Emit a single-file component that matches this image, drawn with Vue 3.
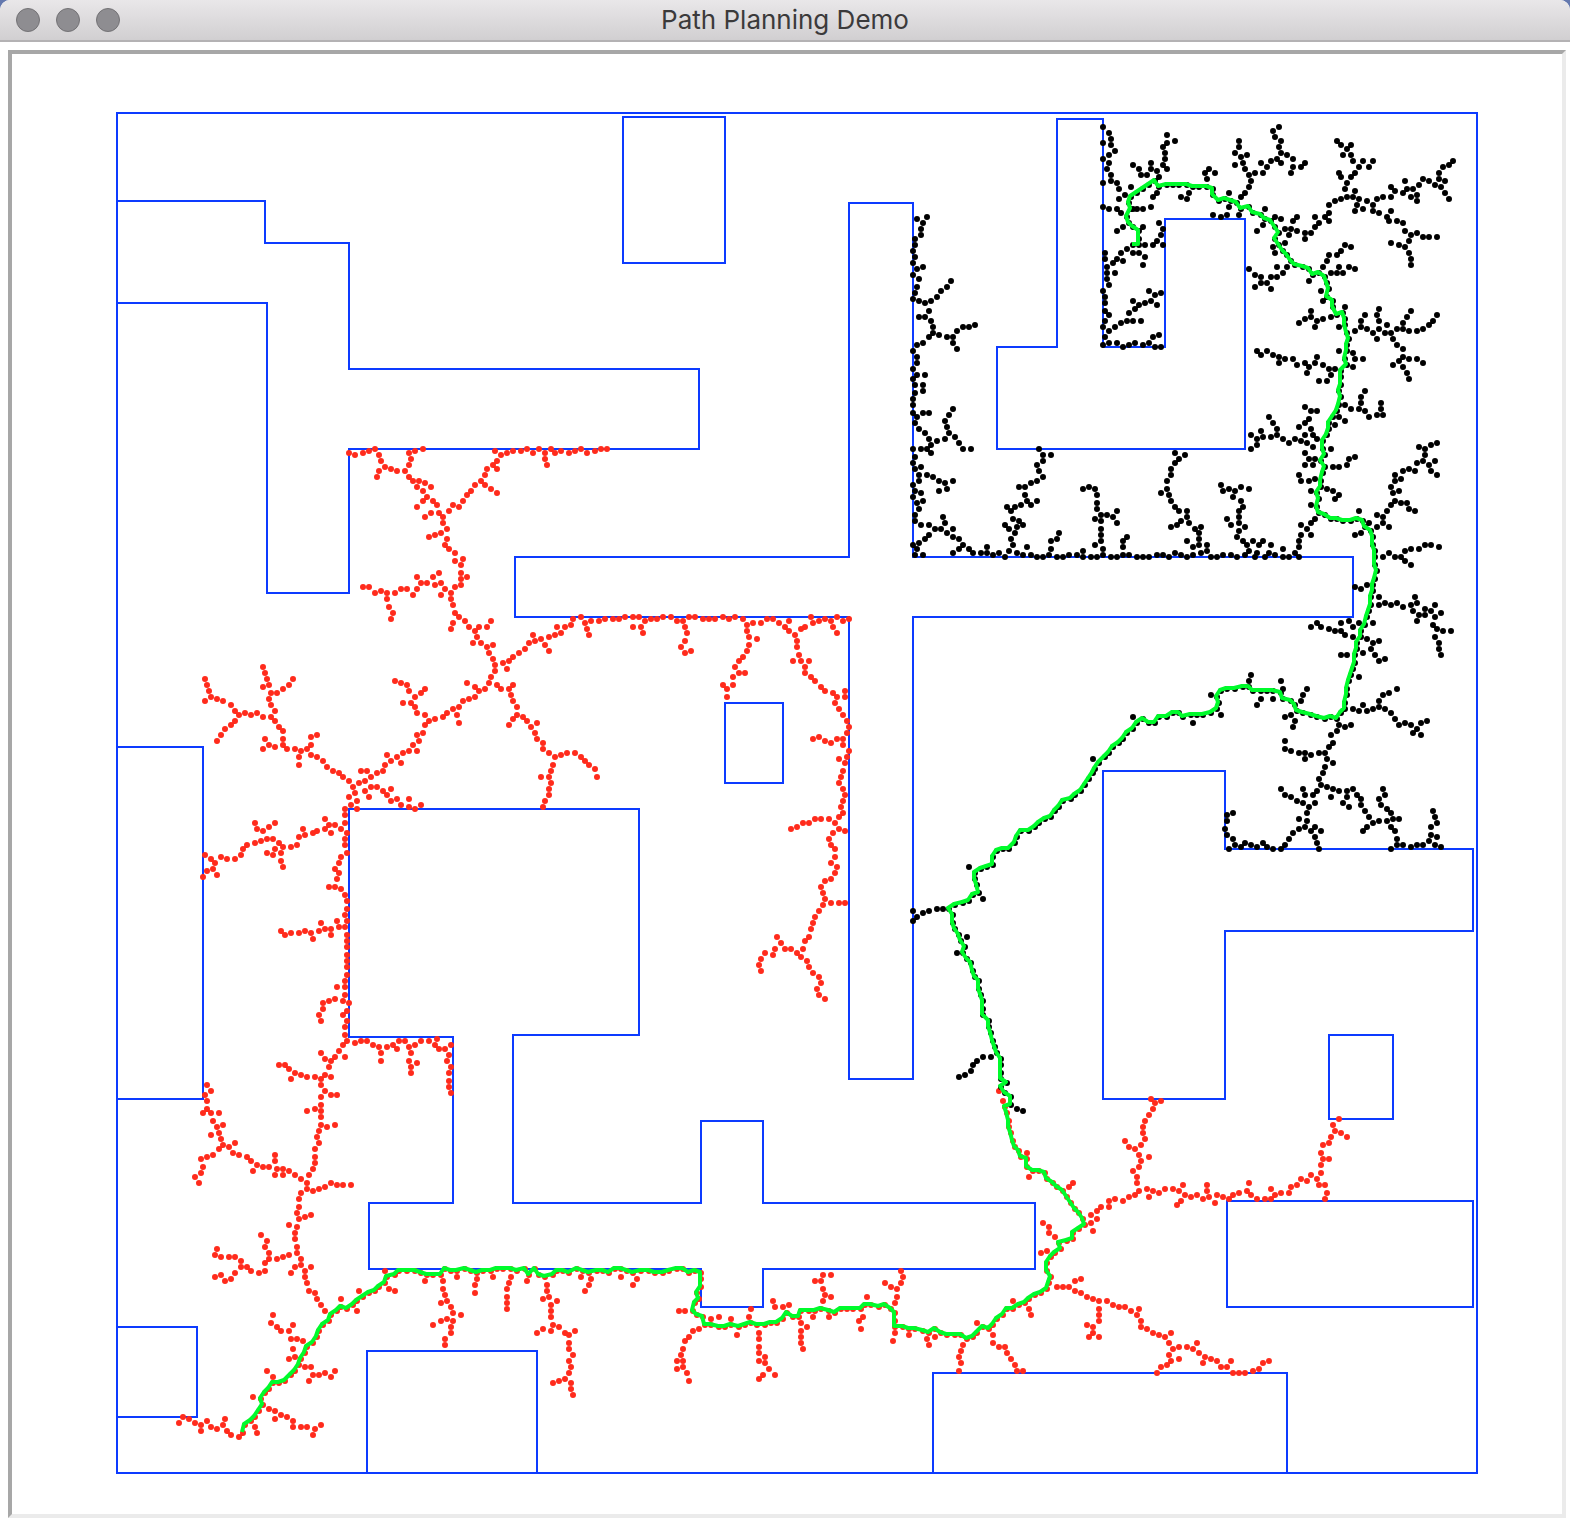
<script setup>
// Each patch lists "x,y" samples measured from its own origin, at `sx` by `sy` steps per pixel.
// Samples settle on the odd pixels of the two-pixel world grid.
const snap = (v) => 2 * Math.round((v - 1) / 2) + 1
const place = ({ x, y, sx = 3, sy = 3, at }) =>
  at.trim().split(/\s+/).map((pair) => {
    const [a, b] = pair.split(',').map(Number)
    return [snap(x + a / sx), snap(y + b / sy)]
  })

const goalPatches = [
  { x: 900, y: 110, at: `609,51 627,69 633,87 633,105 609,99 645,123 627,135 609,147 627,159 621,177 633,195 633,213 609,219 651,219 657,237 675,255 657,267 693,231 609,291 627,297 651,297 663,309 699,297 711,297 729,297 753,291
801,75 825,93 801,99 789,111 795,129 795,147 789,165 801,177 699,165 717,177 723,195 741,195 753,159 753,177 771,183 777,201
771,249 759,261 843,261 861,267 867,249 915,189 927,177 945,189 921,207 987,249 987,291 939,315 963,321 981,315
669,351 651,363 729,351 777,339 789,357 783,375 771,393 789,405 759,405 735,405
681,417 663,429 699,429 717,429 735,441 729,465 651,447 669,453 639,459 615,429 615,447 621,471 621,489 645,489 621,507 627,525 609,543 615,561 615,579 615,603 627,615 615,633 609,651 627,663 645,651 663,639 681,633 699,633 723,633 687,609 705,597 717,585 735,579 753,573 771,585 699,573 747,543 765,555 783,549
615,681 609,705 627,699 651,699 669,711 687,705 705,699 729,705 747,699 759,681 777,675 765,711 783,711
81,321 51,327 69,339 63,357 63,375 45,387 45,405 39,423 45,441 39,459 51,477 69,471 39,495 57,507 51,531 45,549 39,567 57,573 75,579 93,573 111,561 123,543 141,531 153,513 87,603 75,621 57,621 93,633 99,651 99,669 87,681 69,699 51,705 39,723 117,675 141,681 159,681 171,663 189,651 207,651 225,645 159,699 171,717 51,741 51,759 39,777 51,795 75,795 39,807 45,825 69,825 69,843 45,849 39,867 39,885 39,909 51,921 69,909 87,909 45,939 57,957 75,969 87,987 93,1005 111,993 135,987 147,969 141,951 135,933 147,915 159,897 165,981 177,999 189,1017 213,1017 39,1017 63,1017 81,1017 93,1029 45,1041 39,1059 45,1077 63,1071 57,1095 57,1113 81,1095 99,1101 117,1113 135,1119 159,1113 141,1137 117,1143 39,1125 45,1143 63,1149 39,1161 51,1179 69,1173 57,1197 45,1215 45,1233 63,1245 87,1245 105,1257 123,1257 135,1239 129,1221 141,1269 159,1257 159,1281 177,1287 189,1305 177,1317 159,1329 207,1317 219,1329 87,1275 75,1287 57,1299 39,1305 51,1317 45,1335 69,1335
243,1329 261,1329 261,1311 279,1335 297,1329 315,1341 327,1323 339,1305 333,1287 345,1269 327,1257 315,1245 351,1251 369,1245 357,1233 339,1227 333,1203 321,1191 345,1191 363,1185 381,1173 393,1185 411,1173 375,1155 375,1131 357,1131 393,1119 411,1113 429,1101 417,1083 411,1065 429,1053 429,1035 453,1035 417,1017
351,1329 369,1335 381,1311 393,1335 411,1341 429,1341 447,1335 453,1317 453,1293 471,1287 477,1269 471,1341 489,1341 507,1335 531,1335 549,1341 549,1323 573,1341 591,1341 609,1335 609,1317 585,1305 603,1293 603,1275 603,1257 603,1233 585,1227 603,1215 621,1215 639,1221 651,1203 651,1239 591,1197 591,1179 591,1155 585,1137 567,1131 549,1137
633,1341 651,1341 669,1335 669,1311 669,1293 681,1281 687,1335 711,1341 729,1341 747,1341 771,1335 789,1335 807,1341 825,1329 843,1335 861,1341 879,1335 903,1329 921,1323 921,1305 897,1305 879,1311 861,1293 897,1287 897,1269 903,1251 885,1257 867,1239 861,1221 861,1203 837,1203 843,1233 831,1245 813,1251 825,1191 813,1173 807,1155 801,1137 783,1149 801,1113 813,1095 813,1077 825,1059 837,1047 855,1035 825,1029
933,1341 951,1341 969,1335 993,1335` },
  { x: 1220, y: 110, at: `177,51 159,63 165,81 183,93 177,111 183,129 171,147 201,135 219,147 183,159 153,153 123,159 141,171 129,189 105,189 87,195 93,213 87,231 75,249 63,261 75,177 69,159 63,141 81,135 45,129 57,111 57,93 45,165 219,171 243,171 255,159 213,189 27,249 27,291 57,315
135,297 165,321 183,327 129,345 111,363 231,321 219,333 195,357 213,357 231,363 207,375 255,369 273,369 255,387 285,351 297,339 285,321 315,321 327,309 327,333 327,285 345,273 363,267 381,261 399,261 405,243 375,237 381,219 393,201 363,201 357,189 405,189 417,171 399,153 393,135 369,135 381,117 393,105 363,105 351,93 429,153 447,171 459,153
417,267 411,285 405,303 429,297 441,273 459,285 459,303 477,309 471,267 489,261 513,261 525,243 513,231 549,249 561,237 579,237 555,213 573,261 591,255 591,273 597,225 609,207 627,213 645,225 663,231 657,207 675,213 657,189 669,171 687,165 699,153 675,249 687,267
501,321 513,303 507,333 531,333 549,339 555,363 573,375 591,369 609,381 627,381 651,381 567,393 555,411 537,405 513,399 567,429 573,447 573,465
195,399 159,411 165,429 171,471 201,471 189,489 171,501 153,501 123,501 123,519 141,519 153,537 105,495 105,531 87,477
267,513 303,543 309,573 309,471 321,453 327,435 351,435 363,423 375,405 393,411 333,489 351,489 369,489 357,471 387,471 405,477
375,591 357,651 333,621 309,627 291,633 273,621 273,603 255,627 285,651 237,639
405,663 423,651 423,633 435,615 441,657 459,669 471,687 477,657 477,633 471,615 477,597 495,669 501,645 513,669 531,657 549,657 549,639 561,621 573,603 567,663 591,663 609,657 627,645 639,633 651,615 519,687 531,705 549,717 549,741 537,753 519,765 549,771 561,789 567,807 567,747 591,747 609,759
357,723 399,729 405,747 429,747 399,771 345,777 327,777 309,765 333,795 321,813 297,813 285,759 291,741 267,771 261,789 255,759 231,765 219,747 195,747 177,741 177,759 159,735 141,723 123,735 111,723
375,885 393,897 417,897 423,879 423,861 435,843 435,903 447,921 471,915 489,915 483,897 483,879 375,933 357,921 345,945
255,891 273,903 291,903 267,927 255,939 237,951 147,921 159,939 171,957 273,957
171,975 153,981 129,981 123,963 93,975 111,987 111,1005 93,1017 189,987 207,999 225,987 243,993 255,975 261,999 279,975 291,987 279,1011 255,1029 333,1017 267,1047 285,1047 255,1065 279,1065 339,1071 357,1071 381,1065 387,1047 405,1041 237,1095 243,1113 267,1113 285,1107
651,999 633,1005 615,1017 597,1011 615,1035 609,1053 591,1059 627,1065 645,1053 633,1083 651,1095 585,1083 567,1077 549,1083 525,1095 543,1107 525,1113 513,1131` },
  { x: 1200, y: 430, at: `333,183 381,177 399,183 417,195 405,207 333,225 345,267 333,279 303,285 321,297 303,315 333,315 297,333 297,351 285,369 297,381 267,381 249,381 249,357 225,375 213,345 189,333 207,369 195,381 177,345 171,369 165,381 159,333 147,363 141,345 129,333 135,375 111,381 111,321 117,303 135,291 117,279 117,261 117,243 129,231 123,213 99,201 105,183 87,177 69,183 63,165 123,171 147,177 81,267 93,285
579,189 597,183 585,213 603,219 621,219 627,237 645,243 573,225 561,243 549,261 531,255 549,279 567,291 531,291 507,279 477,243 483,309 465,315
549,381 567,369 585,381 603,381 615,363 633,357 657,357 675,345 693,345 717,351 615,393 633,405
465,471 483,477 501,465 537,501 537,525 555,519 573,525 591,519 609,531 633,525 651,519 645,501 639,543 657,555 651,573 675,555 675,537 693,543 705,525 723,549 705,561 699,585 711,597 729,603 753,603 705,621 717,639 717,657 723,675
333,591 351,579 363,591 387,597 405,603 423,603 435,615 423,579 447,573 459,591 477,579 459,621 519,579 501,627 519,639 537,633 513,657 525,675 537,693 555,687 489,669 441,675 423,675 477,741
153,735 147,753 33,795 63,855 243,753 249,777 321,777 309,795 303,813 183,807 171,825 219,807 273,855 255,861 285,873 279,891
459,837 477,843 489,825 501,843 519,837 537,831 537,813 549,795 567,789 591,777 555,837 573,849 585,867 597,885 615,879 633,885 651,897 639,909 663,915 663,879 681,873
417,885 435,891 453,885 411,903 393,915 399,939 387,951 375,969 357,969 333,975 315,969 297,969 315,987 273,963 255,957 255,933 381,987 399,999 375,1011 369,1029 357,1047 363,1065 351,1083 339,1095 345,1119 327,1131 309,1119 291,1113 273,1101 255,1095 243,1077 309,1077 315,1095 321,1149 321,1173 297,1167 315,1191 297,1197 279,1209 267,1227 255,1245 243,1257 219,1257 201,1251 189,1239 171,1251 153,1245 135,1239 123,1251 105,1245 99,1227 81,1215 75,1197 81,1173 81,1155 99,1149 87,1257 333,1203 345,1191 363,1203 345,1221 351,1239 357,1257
381,1071 399,1077 417,1083 393,1101 441,1083 441,1101 429,1119 447,1131 459,1077 471,1095 483,1107 483,1125 495,1143 507,1161 519,1179 501,1191 489,1203 537,1173 561,1173 579,1167 597,1167 573,1149 561,1137 543,1125 537,1107 555,1095 549,1077 573,1191 585,1203 591,1227 591,1245 609,1245 573,1257 633,1251 651,1245 669,1245 687,1233 693,1215 693,1191 711,1179 705,1161 699,1143 711,1221 705,1245 723,1251` },
  { x: 900, y: 670, at: `39,723 39,753 51,741 69,729 87,723 111,717 129,717 207,591 249,687 201,801 171,849 273,1161 249,1161 231,1173 219,1185 213,1203 195,1215 177,1221 351,1317 369,1323 579,267 699,141 879,159` },
]

const startPatches = [
  { x: 170, y: 1030, at: `27,1179 39,1161 57,1167 75,1179 93,1185 93,1203 111,1173 123,1191 141,1197 159,1185 165,1167 171,1203 183,1215 207,1221 255,1191 261,1209 297,1137 315,1143 315,1167 333,1155 351,1161 369,1173 369,1191 393,1191 411,1191 435,1197 453,1185 429,1215 249,1101 291,1023 309,1041 405,1011 423,1011 417,1053 429,1035 447,1035 465,1029 483,1041 495,1023 357,987 375,981 369,957 399,933 381,927 363,927 357,903 369,885 333,903 321,891 303,879 309,855 513,807 561,843 567,783 645,723 657,777 675,783 765,753
465,843 453,825 441,807 435,789 417,783 411,759 405,741 405,723 423,711 393,705 375,711 363,729 393,687 381,669 381,651 357,675 339,681 321,687 297,687 297,669 285,651 291,633 273,615 285,699 285,723 267,729 243,723 231,711 213,711 213,693 195,681 177,681 153,681 135,675 141,657 195,729 183,747 165,753 153,735 135,741 375,627 375,609 381,591 357,585 387,567 405,561 423,555 381,549 387,531 387,507 393,489 411,477 429,483 447,477 465,471 483,459 501,465 519,465 543,465 411,459 393,447 375,435 357,423 339,417 339,435 321,417 315,435 315,393 315,375 297,411 279,411 261,405 249,423 243,393 231,381 207,375 189,369 177,351 195,339 159,345 147,357 129,375 111,381 93,387 99,411 93,429 75,441 87,459 153,327 147,309 123,315 141,291 159,285 129,273 147,249 123,249 111,237 99,249 111,213 105,195 123,183 111,165
417,435 429,417 435,399 435,381 435,357 447,339 441,321 447,303 453,285 471,291 495,285 453,261 453,243 435,237 411,243 453,225 453,201 465,183 483,195 501,195 453,165 453,147 465,135 483,141 435,141 411,141 393,135 375,129 363,147 357,117 345,105 327,105 477,111 483,93 465,87 453,69 495,81 525,81 507,63 519,45 531,33 525,15 555,39 573,33 591,33 609,45 627,51 633,69 633,93 651,51 669,45 681,57 687,33 705,33 717,51 723,69 717,93 741,99 723,111 723,129 735,45 753,33 777,33 795,45 801,27 807,57 825,57 843,45 837,75 831,93 843,111 837,129 837,153 837,171 843,189` },
  { x: 170, y: 640, at: `105,117 111,135 117,153 123,171 105,183 141,177 159,183 183,195 195,213 207,225 195,243 183,255 165,267 153,285 141,303 225,219 243,225 261,219 279,231 303,231 315,213 303,195 297,177 303,159 321,159 339,147 357,135 369,117 297,135 279,141 291,117 285,99 279,81 315,243 327,261 339,273 339,297 339,315 315,321 297,315 285,297 279,327 351,327 375,327 393,333 411,327 423,315 423,291 441,285 387,351 387,375 423,345 441,351 459,363 471,381 489,393 507,399
519,411 537,423 549,441 555,459 537,471 561,483 543,495 561,507 525,507 525,525
525,549 531,579 513,567 495,555 477,555 465,537 465,567 483,579 441,573 429,579 405,585 399,567 387,591 381,615 363,621 339,621 333,639 333,663 339,681 327,609 309,597 291,597 273,603 255,609 315,627 309,645 291,639 231,615 219,627 213,645 195,657 171,657 153,651 123,657 105,645 135,669 129,687 111,693 99,711 141,705 255,549 261,567 279,573 297,561 315,549
525,597 525,615 531,639 513,651 507,669 495,687 507,699 501,717 513,747 495,741 477,741 525,765 531,783 531,807 525,825 531,843 525,861 507,861 501,843 483,867 465,867 483,885 453,849 447,873 423,879 429,897 405,873 387,879 363,879 345,885 333,873
531,885 531,903 531,921 531,945 531,963 531,981 531,1005 525,1023 525,1041 501,1041 525,1065 537,1089 519,1083 495,1077 477,1083 459,1089 459,1107 447,1125 453,1143 531,1113 519,1125 531,1143 525,1161` },
  { x: 340, y: 430, at: `63,1023 81,1023 57,1059 75,1053 93,1041 111,1029 129,1023 135,1005 153,993 141,975 171,981 183,999 189,969 207,963 231,963 219,945 237,933 231,915 249,909 255,885 267,873 255,855 231,849 225,831 213,819 189,819 225,801 243,789 255,777 207,783 201,765 183,759 165,753 285,867 309,861 321,849 339,837 351,855 357,879 357,831 369,813 387,807 405,801 417,783 405,771 381,759 435,777 447,759 453,741 465,723 465,705 459,687 447,669 441,651 459,645 423,639 399,639 411,621 405,603 387,591 417,591 441,591 453,573 375,573 357,561 345,549 339,579 333,597 339,525 333,507 333,489 315,477 303,495 303,459 285,465 279,441 297,429 261,459 243,459 231,441 231,477 219,495 201,477 183,477 165,489 141,489 141,507 147,531 159,549 153,567 123,483 105,489 87,471 69,471 345,471 363,465 363,447 381,441 363,429 363,405 345,393 369,387 345,369 327,357 315,345 321,327 321,297 303,309 285,315 267,321 309,279 309,261 297,249 273,249 255,261 291,225 279,213 261,201 249,213 231,231 249,183 231,171 273,171 255,159 237,153 219,153 207,141 195,123 171,123 153,117 135,111 117,123 111,141 123,93 117,75 105,57 87,63 69,69 45,75 27,69 207,105 213,87 207,69 225,63 249,57
327,243 339,225 357,231 369,213 381,195 393,183 405,165 423,153 435,135 441,117 459,105 471,117 471,93 483,75 465,63 435,165 453,177 471,189 501,69 519,63 543,63 561,57 579,69 597,57 615,69 615,87 621,105 633,57 645,69 663,63 687,69 705,63 723,57 741,69 765,63 783,57 801,57
75,1083 93,1071 111,1071 87,1101 129,1083 141,1095 153,1077 153,1113 171,1107 183,1125 207,1107 207,1131 225,1137 243,1125
471,765 483,777 507,777 519,765 513,795 519,813 531,831 531,855 519,867 507,885 549,861 561,873 573,891 591,879 585,909 591,927 609,939 609,957 627,969 645,981 663,975 681,969 705,969 723,981 735,993 747,1005 765,1017 771,1041 639,1005 633,1023 627,1041 603,1041 633,1059 627,1077 627,1095 615,1113 609,1131
489,699 507,693 501,717 519,681 537,669 555,657 567,639 585,633 579,615 603,627 615,645 627,663 627,621 645,615 663,609 651,591 675,591 693,585 699,567 723,561 735,579 741,597 747,615 753,573 777,573 795,567 819,567 837,567 855,561` },
  { x: 540, y: 600, at: `279,51 297,51 315,63 303,81 279,81 309,99 333,57 351,57 369,51 393,51 411,63 429,63 447,51 465,51 435,81 441,99 435,123 423,141 435,159 453,153 489,57 507,57 525,57 549,51 567,57 585,51 609,57 621,75 639,69 663,69 681,57 699,57 717,69 735,81 747,63 747,93 621,93 627,111 651,117 627,135 621,153 609,171 597,183 585,201 597,219 615,219 579,231 579,255 561,267 549,255 561,291 765,105 783,87 795,81 819,69 813,51 837,63 855,57 873,63 891,51 879,81 891,99 909,63 927,57 771,123 771,141 777,165 759,183 783,183 807,183 795,201 795,219 813,231 825,243 843,261 855,273 879,279 891,291 915,273 915,291 885,309 897,327 909,345 921,363 927,381 921,399 909,417 891,417 909,435 873,429 855,423 837,411 819,417 927,453 921,471 897,477 915,489 909,513 903,531 897,549 909,567 915,585 909,603 903,621 909,639 897,651 885,669 867,657 843,657 825,657 807,669 789,669 771,681 753,687 897,687 915,693 879,699 867,717 873,735 885,747 885,771 873,789 891,801 885,819 873,837 855,843 843,861 849,879 855,897 873,909 897,909 915,909 849,915 837,933 825,951 819,969 813,987 807,1011 795,1023 789,1047 771,1059 753,1047 735,1047 723,1029 711,1011 705,1047 699,1065 675,1059 663,1077 657,1095 663,1113 783,1071 801,1083 807,1101 819,1119 837,1131 843,1149 831,1167 837,1185 855,1197` },
  { x: 430, y: 1250, at: `39,93 39,117 45,135 33,159 51,153 63,171 69,189 93,195 69,213 51,207 33,213 9,225 63,231 63,249 45,267 45,285 81,81 141,87 135,105 135,129 189,81 243,81 237,99 231,117 231,141 231,159 231,177 291,93 351,105 351,123 357,141 339,147 381,153 363,165 363,183 363,201 369,225 387,231 363,243 339,237 321,249 405,249 417,255 435,243 417,279 417,297 429,315 417,333 423,351 417,369 405,387 387,393 369,399 423,399 423,417 429,435 453,81 483,87 477,105 465,123 573,81 621,87 609,105 747,183 765,183 807,237 789,243 777,261 765,273 759,297 753,315 741,333 759,333 759,351 741,357 771,369 777,393 843,207 867,201 903,207 921,255 957,201 963,177 987,249 987,267 987,291 987,309 987,333 1005,321 1005,339 1017,357 999,375 987,387 1035,375 1029,153 1035,171 1059,171 1077,165 1113,219 1131,231 1113,243 1113,261 1113,279 1119,297 1149,201 1155,93 1173,93 1179,75 1179,117 1185,135 1179,153` },
  { x: 820, y: 1080, sx: 2.904, at: `32,585 32,651 26,711 137,651 125,711 113,723 119,747 235,573 241,591 235,609 189,609 206,621 223,627 223,651 217,669 217,759 212,783 258,765 310,777 334,771 316,795 456,729 415,795 410,813 403,831 410,849 403,873 502,765 502,789 520,801 537,801 543,819 555,837 566,855 572,873 589,873 560,663 607,687 612,705 519,33 531,63 601,219 607,291 723,321 734,309 647,429 665,441 665,459 682,471 659,513 642,519 787,405 787,429 804,417 793,453 804,393 816,381 839,381 839,363 856,357 880,363 897,351 914,345 926,333 920,309 920,291 909,273 926,261 932,243 955,231 926,225 914,207 897,201 885,183 932,195 943,177 938,159 938,141 943,123 955,105 967,87 973,69 961,57 990,63
949,327 967,333 955,351 984,339 1002,327 1025,327 1042,333 1054,315 1060,345 1077,351 1048,363 1036,375 1095,345 1112,357 1124,333 1124,315 1130,351 1147,369 1153,345 1170,351 1188,357 1199,345 1217,339 1240,333 1245,309 1251,345 1269,357 1292,357 1309,357 1309,327 1321,345 1339,339 1362,339 1367,321 1385,315 1397,297 1414,303 1426,285 1443,297 1449,315 1466,315 1472,339 1466,357 1455,279 1455,255 1460,237 1478,237 1455,219 1460,195 1478,189 1484,171 1495,153 1513,159 1530,171 1490,135 1507,117
688,621 706,621 723,621 740,603 758,597 740,633 758,639 775,651 793,657 810,663 834,663 810,687 810,705 810,723 775,735 793,741 793,759 781,771 810,771 851,675 868,681 885,681 903,693 926,687 920,705 932,723 932,741 949,747 967,759 984,765 1002,771 1019,759 1013,789 1025,807 1042,801 1066,801 1083,807 1095,789 1013,825 1042,837 1019,843 1007,855 990,861 978,879 1101,819 1118,831 1112,849 1135,837 1153,843 1164,861 1182,861 1193,843 1199,879 1217,879 1234,879 1257,873 1275,867 1286,849 1303,843` },
]

// Nodes of the found route: first the half grown from the goal, then the half grown from the start.
const goalRoute = [
  { x: 900, y: 110, at: `699,405 717,405 717,387 717,363 699,351 687,339 681,321 693,297 687,279 693,261 711,249 729,237 747,225 765,213 777,231 801,225 819,225 837,225 861,225 879,231 897,231 921,231 939,237 939,255 957,273 975,267` },
  { x: 1220, y: 110, at: `33,273 51,279 63,297 87,291 99,309 123,315 135,327 153,333 165,351 177,369 165,387 177,405 189,423 201,435 213,453 225,465 249,471 267,477 279,495 297,489 315,501 321,519 327,537 321,561 339,573 339,591 351,615 369,609 375,627 375,645 381,669 387,687 381,705 381,723 375,747 381,765 363,783 363,801 363,825 357,843 363,861 357,885 351,903 339,921 327,939 327,957 321,975 309,993 309,1017 315,1035 303,1053 315,1071 309,1089 303,1113` },
  { x: 1200, y: 430, at: `363,171 351,189 357,207 351,231 357,249 375,255 393,267 411,267 429,273 453,273 471,267 489,273 495,291 513,303 519,321 519,345 525,363 525,381 525,405 531,423 525,447 519,465 519,483 513,501 513,525 507,543 501,561 495,585 483,603 483,621 471,639 471,657 465,675 465,699 459,717 453,735 447,753 441,777 441,795 435,819 435,837 423,849 411,867 393,861 375,867 351,861 333,855 309,849 291,843 285,825 273,813 249,807 243,789 219,783 201,783 183,783 159,783 147,771 129,771 105,777 81,777 63,783 51,801 57,819 51,837 33,849` },
  { x: 900, y: 670, at: `909,135 891,135 873,135 849,141 837,129 819,129 801,141 777,141 765,159 747,159 729,147 711,159 699,177 681,189 669,207 657,219 639,231 627,249 615,261 597,279 585,297 579,309 567,327 555,345 543,363 525,375 513,387 489,393 477,411 465,423 453,441 435,447 417,459 405,471 387,483 363,483 351,501 345,519 327,537 309,537 291,543 279,561 279,585 261,591 243,597 225,609 225,627 231,645 237,669 219,675 207,693 189,699 165,705 147,717 159,735 159,759 165,777 177,795 183,813 195,831 189,849 201,867 213,879 219,903 225,921 237,933 237,957 243,975 249,993 249,1017 249,1035 267,1053 267,1071 273,1089 279,1113 285,1131 291,1149 303,1167 303,1185 303,1209 303,1227 321,1239 303,1251 315,1269 333,1281 333,1305` },
]
const startRoute = [
  { x: 820, y: 1080, sx: 2.904, at: `537,81 544,99 550,123 550,141 556,159 561,183 567,201 579,213 585,231 600,237 600,261 618,273 635,273 653,279 658,297 676,309 688,321 705,333 717,351 729,369 740,387 752,399 763,417 769,435 752,447 734,459 734,477 717,483 694,489 700,507 682,519 671,531 659,549 659,573 671,591 665,609 659,627 641,639 624,645 607,657 595,669 577,675 560,687 543,687 531,705 514,717 502,735 490,747 473,741 456,759 444,771 427,777 410,765 392,765 369,765 351,759 334,747 316,759 298,753 275,747 258,747 240,741 217,741 217,723 217,699 206,687 188,675 171,681 148,675 130,675 118,687 96,687 78,687 61,687 43,699 26,693 3,687` },
  { x: 430, y: 1250, at: `1155,183 1137,183 1113,183 1107,201 1089,201 1071,189 1059,207 1041,219 1023,219 1005,225 981,225 963,219 945,225 927,231 903,225 885,231 867,231 843,225 825,225 819,201 801,195 789,183 795,159 807,147 801,129 813,111 813,87 813,69 795,63 777,69 759,57 741,57 717,63 699,69 675,69 657,63 633,63 609,69 591,63 573,57 555,57 537,69 519,63 501,63 477,69 459,63 441,57 417,69 399,63 381,63 369,75 345,81 327,75 315,57 297,75 285,57 261,63 243,57 219,57 201,57 183,63 159,63 141,69 123,63 105,57 81,63 63,63 45,57 33,75 9,75` },
  { x: 170, y: 1030, at: `771,735 753,729 735,723 711,723 687,723 675,735 651,741 645,759 627,771 615,783 597,789 579,801 561,813 549,825 531,837 513,831 501,843 483,855 477,873 459,885 447,903 441,921 429,939 411,951 405,969 393,987 387,1005 375,1023 363,1035 345,1053 327,1059 309,1059 297,1077 285,1089 273,1107 279,1125 267,1143 255,1161 243,1173 225,1185 219,1209` },
]

const dots = (points) => points.map(([x, y]) => `M${x} ${y}h0`).join('')

const goalHalf = goalRoute.flatMap(place)
const startHalf = startRoute.flatMap(place)
const goalTree = dots([...goalPatches.flatMap(place), ...goalHalf])
const startTree = dots([...startPatches.flatMap(place), ...startHalf])
const route = [...goalHalf, ...startHalf].map(([x, y]) => `${x - 1},${y - 1}`).join(' ')

const walls = [
  'M117 113H1477V1473H117Z',
  'M117 201H265V243H349V369H699V449H349V593H267V303H117',
  'M623 117H725V263H623Z',
  'M849 203H913V557H1353V617H913V1079H849V617H515V557H849Z',
  'M1057 119H1103V347H1165V219H1245V449H997V347H1057Z',
  'M725 703H783V783H725Z',
  'M1103 771H1225V849H1473V931H1225V1099H1103Z',
  'M1329 1035H1393V1119H1329Z',
  'M1227 1201H1473V1307H1227Z',
  'M933 1473V1373H1287V1473',
  'M117 747H203V1099H117',
  'M117 1327H197V1417H117',
  'M367 1473V1351H537V1473',
  'M349 809H639V1035H513V1203H701V1121H763V1203H1035V1269H763V1307H701V1269H369V1203H453V1037H349Z',
].join('')
</script>

<template>
  <div class="window">
    <header class="titlebar">
      <div class="controls">
        <button type="button" aria-label="Close"></button>
        <button type="button" aria-label="Minimize"></button>
        <button type="button" aria-label="Zoom"></button>
      </div>
      <h1>Path Planning Demo</h1>
    </header>
    <main class="canvas">
      <svg viewBox="12 54 1550 1460" role="img" aria-label="Obstacle map with two search trees and the route between them">
        <path class="walls" :d="walls" />
        <path class="tree start" :d="startTree" />
        <path class="tree goal" :d="goalTree" />
        <polyline class="route" :points="route" />
      </svg>
    </main>
  </div>
</template>

<style>
body {
  margin: 0;
  background: #6478ae;
}
</style>

<style scoped>
.window {
  background: #fff;
  border-radius: 10px 10px 0 0;
  overflow: hidden;
  padding-bottom: 4px;
}

.titlebar {
  display: grid;
  grid-template-columns: 1fr auto 1fr;
  align-items: center;
  height: 42px;
  box-sizing: border-box;
  padding: 0 16px;
  border-bottom: 2px solid #b4b2b4;
  background: linear-gradient(#e9e7e9, #d1cfd1);
}

.controls {
  display: flex;
  gap: 16px;
}

.controls button {
  width: 24px;
  height: 24px;
  padding: 0;
  border: 1px solid #737275;
  border-radius: 50%;
  background: #8e8d91;
}

h1 {
  margin: 0;
  font: 400 26px/40px Inter, "Liberation Sans", sans-serif;
  color: #3b3a3b;
}

.canvas {
  margin: 8px 4px 0 8px;
  border: 4px solid;
  border-color: #a7a7a7 #ebebeb #ebebeb #a7a7a7;
}

svg {
  display: block;
  width: 100%;
  height: auto;
}

.walls,
.tree,
.route {
  fill: none;
}

.walls {
  stroke: #0d3bff;
  stroke-width: 2;
}

.tree {
  stroke-width: 6;
  stroke-linecap: round;
}

.start {
  stroke: #ff2b1c;
}

.goal {
  stroke: #000;
}

.route {
  stroke: #00fb2c;
  stroke-width: 4;
  stroke-linejoin: round;
}
</style>
